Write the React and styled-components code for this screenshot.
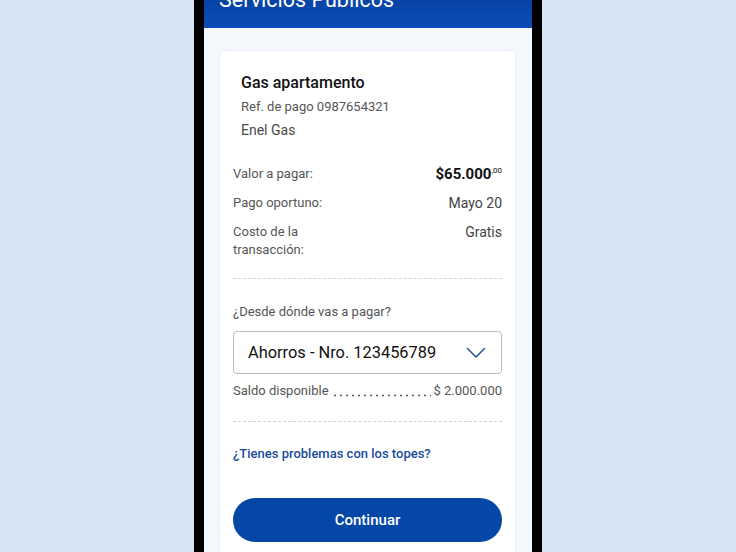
import React from "react";
import styled, { createGlobalStyle } from "styled-components";

const GlobalStyle = createGlobalStyle`
  html, body {
    margin: 0;
    padding: 0;
    background: #d5e5f6;
    font-family: Roboto, "Liberation Sans", Arial, sans-serif;
  }
`;

const Page = styled.div`
  height: 552px;
  overflow: hidden;
  display: flex;
  justify-content: center;
`;

const Phone = styled.div`
  width: 328px;
  border-left: 10px solid #000;
  border-right: 10px solid #000;
  background: #f4f7fc;
  display: flex;
  flex-direction: column;
`;

const Header = styled.header`
  height: 28px;
  flex-shrink: 0;
  background: linear-gradient(#0743a6, #0b4db6);
  padding-left: 15px;
  overflow: hidden;
`;

const Title = styled.h1`
  margin: -12px 0 0;
  font-size: 21.5px;
  line-height: 24px;
  font-weight: 400;
  color: #fff;
`;

const Content = styled.main`
  padding: 22px 16px 0 15px;
`;

const Card = styled.section`
  background: #fff;
  border: 1px solid #eceff3;
  border-radius: 6px;
  padding: 21px 13px 40px 13px;
`;

const Bill = styled.div`
  padding-left: 8px;
  margin-bottom: 25px;
`;

const BillName = styled.h2`
  margin: 0;
  font-size: 16px;
  line-height: 22px;
  font-weight: 500;
  color: #111;
`;

const Ref = styled.div`
  margin-top: 4px;
  font-size: 13px;
  line-height: 18px;
  color: #555;
`;

const Company = styled.div`
  margin-top: 4px;
  font-size: 14px;
  line-height: 20px;
  color: #4a4a4a;
`;

const Details = styled.div`
  display: flex;
  flex-direction: column;
  gap: 11px;
`;

const Row = styled.div`
  display: flex;
  justify-content: space-between;
  align-items: flex-start;
`;

const Label = styled.div`
  font-size: 13px;
  line-height: 18px;
  color: #555;
  max-width: ${(p) => p.$max || "none"};
`;

const Value = styled.div`
  font-size: 14px;
  line-height: 18px;
  color: #444;
  text-align: right;
`;

const Amount = styled.div`
  height: 18px;
  font-size: 15px;
  line-height: 18px;
  font-weight: 700;
  color: #111;

  sup {
    font-size: 8px;
    font-weight: 400;
    vertical-align: 6px;
    line-height: 0;
  }
`;

const Divider = styled.hr`
  margin: ${(p) => p.$margin};
  border: 0;
  border-top: 1px dashed #cfd3d8;
`;

const Question = styled.div`
  font-size: 13px;
  line-height: 18px;
  color: #555;
`;

const Select = styled.button`
  margin-top: 10px;
  width: 100%;
  height: 43px;
  box-sizing: border-box;
  display: flex;
  align-items: center;
  justify-content: space-between;
  padding: 0 15px 0 14px;
  background: #fff;
  border: 1px solid #bdbdbd;
  border-radius: 4px;
  font-family: inherit;
  font-size: 16.4px;
  color: #111;
  cursor: pointer;
`;

const Balance = styled.div`
  margin-top: 8px;
  display: flex;
  font-size: 13px;
  line-height: 18px;
  color: #555;
  white-space: nowrap;
`;

const Leader = styled.span`
  flex: 1;
  margin: 0 2px 0 3px;
  background-image: radial-gradient(circle, #555 0.85px, transparent 1.2px);
  background-size: 6px 3px;
  background-repeat: repeat-x;
  background-position: 0 11.5px;
`;

const Link = styled.a`
  display: block;
  font-size: 13px;
  line-height: 18px;
  font-weight: 500;
  color: #1a4c9c;
  text-decoration: none;
  cursor: pointer;
`;

const PrimaryButton = styled.button`
  margin-top: 35px;
  width: 100%;
  height: 44px;
  border: 0;
  border-radius: 22px;
  background: #0547a7;
  color: #fff;
  font-family: inherit;
  font-size: 15px;
  font-weight: 500;
  cursor: pointer;
`;

const Chevron = () => (
  <svg width="20" height="12" viewBox="0 0 20 12" fill="none">
    <path d="M1.5 1.5 L10 10 L18.5 1.5" stroke="#1d4f9e" strokeWidth="1.5" strokeLinecap="round" strokeLinejoin="round" />
  </svg>
);

const App = () => {
  return (
    <Page>
      <GlobalStyle />
      <Phone>
        <Header>
          <Title>Servicios Públicos</Title>
        </Header>
        <Content>
          <Card>
            <Bill>
              <BillName>Gas apartamento</BillName>
              <Ref>Ref. de pago 0987654321</Ref>
              <Company>Enel Gas</Company>
            </Bill>
            <Details>
              <Row>
                <Label>Valor a pagar:</Label>
                <Amount>
                  $65.000<sup>,00</sup>
                </Amount>
              </Row>
              <Row>
                <Label>Pago oportuno:</Label>
                <Value>Mayo 20</Value>
              </Row>
              <Row>
                <Label $max="90px">Costo de la transacción:</Label>
                <Value>Gratis</Value>
              </Row>
            </Details>
            <Divider $margin="19px 0 24px" />
            <Question>¿Desde dónde vas a pagar?</Question>
            <Select>
              <span>Ahorros - Nro. 123456789</span>
              <Chevron />
            </Select>
            <Balance>
              <span>Saldo disponible</span>
              <Leader />
              <span>$ 2.000.000</span>
            </Balance>
            <Divider $margin="21px 0 23px" />
            <Link>¿Tienes problemas con los topes?</Link>
            <PrimaryButton>Continuar</PrimaryButton>
          </Card>
        </Content>
      </Phone>
    </Page>
  );
};

export default App;
